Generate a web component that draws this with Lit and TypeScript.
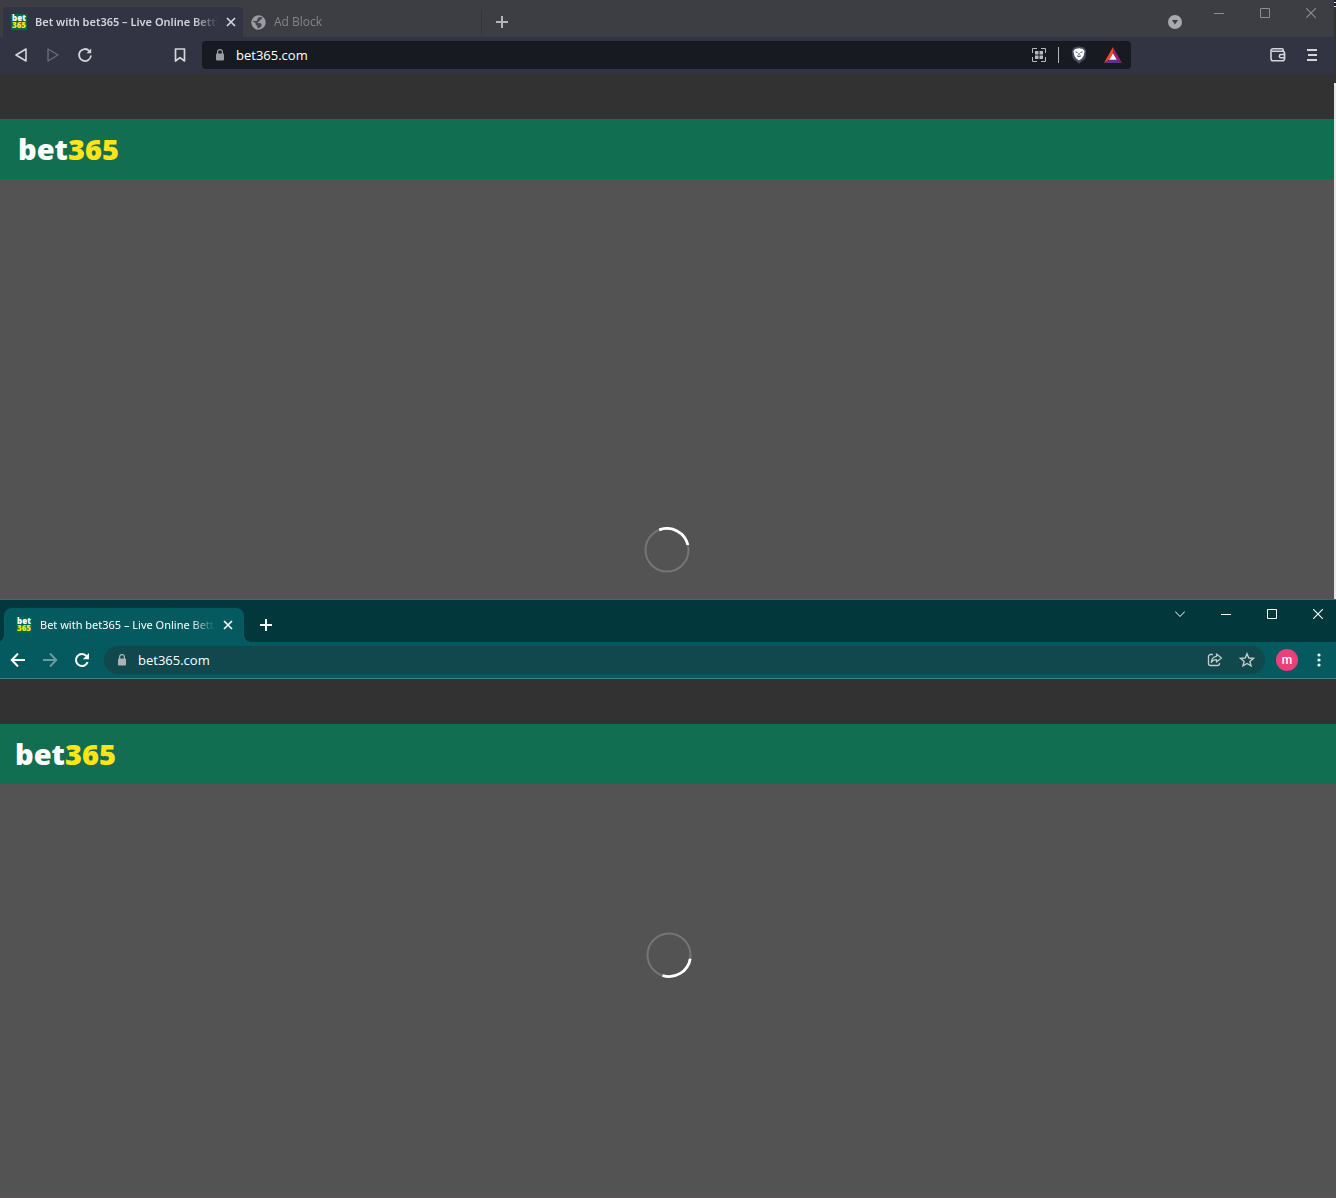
import { LitElement, html, css, svg } from "lit";
import { customElement, property } from "lit/decorators.js";

const ui = css`
  *, *::before, *::after { box-sizing: border-box; }
  button {
    display: flex; align-items: center; justify-content: center; flex: none;
    border: 0; padding: 0; margin: 0; background: none; color: inherit; font: inherit;
  }
  svg { display: block; flex: none; }
  input {
    flex: 1; min-width: 0; border: 0; padding: 0; margin: 0; outline: 0;
    background: none; color: #fff; font: 13px/20px "Open Sans", "Noto Sans", sans-serif;
  }
`;

const line = (size: number, body: unknown, width = 1) => html`
  <svg width=${size} height=${size} viewBox="0 0 ${size} ${size}" fill="none"
    stroke="currentColor" stroke-width=${width} aria-hidden="true">${body}</svg>`;

const closeTab = line(10, svg`<path d="M1 1l8 8M9 1l-8 8"/>`, 1.7);
const plus = line(12, svg`<path d="M6 0v12M0 6h12"/>`, 2);
const minimise = line(11, svg`<path d="M0 5.5h10"/>`);
const maximise = line(11, svg`<path d="M.5.5h9v9h-9z"/>`);
const closeWindow = line(10, svg`<path d="M.2.2l9.6 9.6M9.8.2L.2 9.800"/>`, 1.1);
const lock = html`
  <svg width="10" height="12" viewBox="0 0 10 12" aria-hidden="true">
    <path d="M2.6 5V3a2.4 2.4 0 0 1 4.8 0v2" fill="none" stroke="currentColor" stroke-width="1.3"/>
    <rect x="1" y="4.5" width="8" height="7" rx="1" fill="currentColor"/>
  </svg>`;

@customElement("site-favicon")
export class SiteFavicon extends LitElement {
  static styles = css`
    :host { display: block; flex: none; width: 16px; height: 16px; background: #04694a; }
    svg { display: block; overflow: visible; }
    .text { font: 800 8px "Open Sans", sans-serif; }
  `;
  render() {
    return html`
      <svg width="16" height="16" viewBox="0 0 16 16" aria-hidden="true">
        <text class="text" x="8" y="7" text-anchor="middle" fill="#fff">bet</text>
        <text class="text" x="8" y="14" text-anchor="middle" fill="#ffe418">365</text>
      </svg>`;
  }
}

@customElement("loading-page")
export class LoadingPage extends LitElement {
  @property({ type: Number }) angle = 0;

  static styles = css`
    :host { display: flex; flex-direction: column; flex: 1; background: #535353; }
    .top { height: 45px; background: #323232; }
    .header {
      display: flex; align-items: center; height: 60px; background: #126e51;
      padding-left: var(--logo-inset, 18px);
    }
    .logo { font: 800 29px/40px "Open Sans", sans-serif; color: #fff; text-decoration: none; }
    .digits { color: #ffe418; }
    .stage { display: flex; justify-content: center; padding: var(--stage-padding); }
    svg { display: block; }
  `;

  render() {
    return html`
      <div class="top"></div>
      <header class="header"><a class="logo" href="#">bet<span class="digits">365</span></a></header>
      <main class="stage">
        <svg width="46" height="46" viewBox="0 0 46 46" fill="none" role="img" aria-label="Loading">
          <circle cx="23" cy="23" r="21.5" stroke="#757575" stroke-width="2"/>
          <path d="M15.2 2.9A21.5 21.5 0 0 1 43.900 18" stroke="#fff" stroke-width="2.800"
            transform="rotate(${this.angle} 23 23)"/>
        </svg>
      </main>`;
  }
}

@customElement("brave-window")
export class BraveWindow extends LitElement {
  static styles = [ui, css`
    :host {
      display: flex; flex-direction: column; flex: 1; min-width: 0; background: #323443;
      font: 12px/16px "Open Sans", "Noto Sans", sans-serif; color: #d4d5da;
    }
    .strip { display: flex; align-items: flex-end; height: 37px; background: #3d3d44; padding-left: 3px; }
    .tab { display: flex; align-items: center; height: 30px; width: 240px; padding: 0 7px 0 8px; gap: 8px; }
    .active {
      background: #323443; border-radius: 4px 4px 0 0;
      font: 600 11px/16px "Noto Sans", "Open Sans", sans-serif;
    }
    .title {
      flex: 1; min-width: 0; overflow: hidden; white-space: nowrap;
      mask-image: linear-gradient(to right, #000 calc(100% - 24px), transparent);
    }
    .idle { color: #84848b; width: 239px; height: 24px; margin-bottom: 3px; border-right: 1px solid #35343b; }
    .new { width: 40px; height: 30px; color: #b5b5b8; }
    .fill { flex: 1; }
    .search { width: 30px; height: 30px; margin-right: 6px; }
    .controls { display: flex; align-self: flex-start; color: #8d8d91; }
    .controls button { width: 46px; height: 26px; }
    .bar { display: flex; align-items: center; height: 37px; padding: 0 6px 1px 5px; }
    .bar > button { width: 32px; height: 32px; }
    .bar .off { color: #696b77; }
    .bar .mark { margin-left: 63px; }
    .address {
      display: flex; align-items: center; flex: 1; height: 28px; margin: 0 131px 0 6px;
      padding: 0 9px 0 13px; gap: 11px; border-radius: 4px; background: #181a22;
    }
    .lock { color: #9a9ba4; }
    .actions { display: flex; align-items: center; gap: 12px; }
    .rule { width: 1px; height: 16px; background: #b4b5ba; }
    .actions .reward { margin-left: 5px; }
    .bar .menu { margin-left: 2px; }
  `];

  render() {
    return html`
      <div class="strip">
        <div class="tab active">
          <site-favicon></site-favicon>
          <span class="title">Bet with bet365 – Live Online Betting</span>
          <button aria-label="Close tab">${closeTab}</button>
        </div>
        <div class="tab idle">
          <svg width="15" height="15" viewBox="0 0 15 15" aria-hidden="true">
            <circle cx="7.5" cy="7.5" r="7.2" fill="#9b9ca3"/>
            <path d="M8.500 2l3 .6-.8 1.700-1.900.6-.3 1.500-2 .5.4 1.200 2.800.2 1 1.800-.9 1.800-2.300 1.300-1.200-.2.1-1.900L4.800 9.800l-.2-1.500L2 6.600l.3-.9 2.700.5 1.200-.9.300-1.700z" fill="#45454c"/>
          </svg>
          <span class="title">Ad Block</span>
        </div>
        <button class="new" aria-label="New tab">${plus}</button>
        <span class="fill"></span>
        <button class="search" aria-label="Search tabs">
          <svg width="14" height="14" viewBox="0 0 14 14" aria-hidden="true">
            <circle cx="7" cy="7" r="7" fill="#a9a9ad"/><path d="M4 5h6L7 9.6z" fill="#3d3c44"/>
          </svg>
        </button>
        <div class="controls">
          <button aria-label="Minimize">${minimise}</button>
          <button aria-label="Maximize">${maximise}</button>
          <button aria-label="Close">${closeWindow}</button>
        </div>
      </div>
      <div class="bar">
        <button aria-label="Back">${line(14, svg`<path d="M12 1v12L2 7z" stroke-linejoin="round"/>`, 1.6)}</button>
        <button class="off" aria-label="Forward">${line(14, svg`<path d="M2 1v12L12 7z" stroke-linejoin="round"/>`, 1.4)}</button>
        <button aria-label="Reload">${line(16, svg`<path d="M14 8.5A6 6 0 1 1 12.300 3.800"/><path d="M14.200 1.500v4.700H9.500z" fill="currentColor" stroke="none"/>`, 1.8)}</button>
        <button class="mark" aria-label="Bookmark">${line(14, svg`<path d="M2.5 1h9v12L7 9.600 2.500 13z" stroke-linejoin="round"/>`, 1.7)}</button>
        <div class="address">
          <span class="lock">${lock}</span>
          <input aria-label="Address" .value=${"bet365.com"} />
          <div class="actions">
            <button aria-label="QR code">
              <svg width="14" height="14" viewBox="0 0 14 14" aria-hidden="true">
                <path d="M.5 5V.5H5M9 .5h4.500V5M13.500 9v4.500H9M5 13.500H.5V9" fill="none" stroke="#b9bac0"/>
                <path d="M3 3h3.500v3.500H3zM7.500 3H11v3.500H7.500zM3 7.500h3.500V11H3zM7.500 7.500H11V11H7.500z" fill="#b9bac0"/>
              </svg>
            </button>
            <span class="rule"></span>
            <button aria-label="Shields">
              <svg width="16" height="18" viewBox="0 0 16 18" aria-hidden="true">
                <path d="M3 1.500L8 .3l5 1.200 2.200 3-1 8L8 17.700 1.800 12.500l-1-8z" fill="#4b4d5e"/>
                <path d="M4.200 3L8 2.200 11.800 3l1.800 2.200-1 4.600-1.900 2.700L8 14.500l-2.700-2-1.900-2.700-1-4.600z" fill="#fff"/>
                <path d="M4.500 5.800l2 .7M11.500 5.800l-2 .7M8 7v2.500M6 9.700l1.200.8h1.600l1.200-.8" fill="none" stroke="#4b4d5e" stroke-width="1"/>
              </svg>
            </button>
            <button class="reward" aria-label="Rewards">
              <svg width="18" height="16" viewBox="0 0 18 16" aria-hidden="true">
                <path d="M9 0L0 16l5.400-3.200L9 6z" fill="#ff4724"/>
                <path d="M9 0l9 16-5.400-3.200L9 6z" fill="#9e1f63"/>
                <path d="M0 16h18l-5.400-3.200H5.400z" fill="#662d91"/>
                <path d="M9 6.200l3.700 6.500H5.300z" fill="#fff"/>
              </svg>
            </button>
          </div>
        </div>
        <button aria-label="Wallet">${line(16, svg`<path d="M13.300 4.300V3.200a1.400 1.400 0 0 0-1.400-1.400H3a2 2 0 0 0-2 2v7.900a2 2 0 0 0 2 2h9.500a2 2 0 0 0 2-2V6.300a2 2 0 0 0-2-2H2M15.500 7.500H11a1.600 1.600 0 0 0 0 3.300h4.500"/>`, 1.6)}</button>
        <button class="menu" aria-label="Menu">${line(12, svg`<path d="M1 1h10M2 6h9M1 11h10"/>`, 2)}</button>
      </div>
      <loading-page></loading-page>`;
  }
}

@customElement("chrome-window")
export class ChromeWindow extends LitElement {
  static styles = [ui, css`
    :host {
      display: flex; flex-direction: column; flex: 1; background: #045a5f; color: #fff;
      border-top: 1px solid #4d6163; border-bottom: 1px solid #5a5358;
      font: 12px/16px "Open Sans", "Noto Sans", sans-serif;
    }
    .strip { display: flex; align-items: flex-end; height: 42px; background: #02373c; padding-left: 4px; }
    .tab {
      position: relative; display: flex; align-items: center; gap: 8px; width: 240px; height: 34px;
      padding: 0 11px 0 12px; background: #045a5f; border-radius: 8px 8px 0 0;
      font: 11px/16px "Noto Sans", "Open Sans", sans-serif;
    }
    .tab::before, .tab::after { content: ""; position: absolute; bottom: 0; width: 8px; height: 8px; }
    .tab::before { right: 100%; background: radial-gradient(circle at 0 0, transparent 8px, #045a5f 8px); }
    .tab::after { left: 100%; background: radial-gradient(circle at 100% 0, transparent 8px, #045a5f 8px); }
    .title {
      flex: 1; min-width: 0; overflow: hidden; white-space: nowrap;
      mask-image: linear-gradient(to right, #000 calc(100% - 24px), transparent);
    }
    .new { width: 44px; height: 34px; }
    .fill { flex: 1; }
    .controls { display: flex; align-self: flex-start; gap: 10px; }
    .controls button { width: 36px; height: 28px; }
    .bar { display: flex; align-items: center; height: 37px; padding: 0 6px 1px 2px; border-bottom: 1px solid #3d8185; }
    .bar > button { width: 32px; height: 28px; }
    .bar .off { color: #6a9b9f; }
    .address {
      display: flex; align-items: center; flex: 1; height: 28px; margin: 0 11px 0 6px;
      padding: 0 10px 0 13px; gap: 11px; border-radius: 14px; background: #10484d;
    }
    .lock { color: #adb2b4; }
    .actions { display: flex; gap: 16px; color: #c2cccd; }
    .bar .avatar {
      width: 22px; height: 22px; border-radius: 50%; background: #ec407a;
      font: 500 12px/20px Roboto, sans-serif;
    }
    .bar .menu { width: 22px; margin-left: 10px; }
    loading-page { --logo-inset: 15px; --stage-padding: 148px 0 0 2px; }
  `];

  render() {
    return html`
      <div class="strip">
        <div class="tab">
          <site-favicon></site-favicon>
          <span class="title">Bet with bet365 – Live Online Betting</span>
          <button aria-label="Close tab">${closeTab}</button>
        </div>
        <button class="new" aria-label="New tab">${plus}</button>
        <span class="fill"></span>
        <div class="controls">
          <button aria-label="Search tabs">${line(10, svg`<path d="M.2 2.500L5 7.500l4.800-5"/>`)}</button>
          <button aria-label="Minimize">${minimise}</button>
          <button aria-label="Maximize">${maximise}</button>
          <button aria-label="Close">${closeWindow}</button>
        </div>
      </div>
      <div class="bar">
        <button aria-label="Back">${line(16, svg`<path d="M15 8H2M8 1.500L1.800 8 8 14.500"/>`, 2)}</button>
        <button class="off" aria-label="Forward">${line(16, svg`<path d="M1 8h13M8 1.500L14.200 8 8 14.500"/>`, 2)}</button>
        <button aria-label="Reload">${line(16, svg`<path d="M13.600 10.200A6 6 0 1 1 12.600 4.200"/><path d="M15 1v6.200H8.800z" fill="currentColor" stroke="none"/>`, 2)}</button>
        <div class="address">
          <span class="lock">${lock}</span>
          <input aria-label="Address" .value=${"bet365.com"} />
          <div class="actions">
            <button aria-label="Share">${line(16, svg`<path d="M6 2.500H3.500a2 2 0 0 0-2 2v7a2 2 0 0 0 2 2h7a2 2 0 0 0 2-2V11"/><path d="M9.500 2l5 4-5 4V7.700C7 7.700 5.500 8.500 4.300 10.500 4.500 7 6.500 4.700 9.500 4.300z" stroke-linejoin="round"/>`, 1.3)}</button>
            <button aria-label="Bookmark">${line(16, svg`<path d="M8 1.800l1.800 4.200 4.600.4-3.500 3 1.100 4.500L8 11.500l-4 2.400 1.100-4.500-3.500-3 4.600-.4z"/>`, 1.4)}</button>
          </div>
        </div>
        <button class="avatar" aria-label="Profile m">m</button>
        <button class="menu" aria-label="Menu">
          <svg width="4" height="14" viewBox="0 0 4 14" fill="currentColor" aria-hidden="true">
            <circle cx="2" cy="2" r="1.600"/><circle cx="2" cy="7" r="1.600"/><circle cx="2" cy="12" r="1.600"/>
          </svg>
        </button>
      </div>
      <loading-page angle="121"></loading-page>`;
  }
}

@customElement("app-root")
export class AppRoot extends LitElement {
  static styles = css`
    :host { display: flex; flex-direction: column; min-height: 100vh; background: #535353; }
    .upper { display: flex; }
    .edge { display: flex; flex-direction: column; width: 2px; flex: none; background: #e8e8e8; }
    .shade {
      height: 83px;
      background: linear-gradient(#1c1b2b 2px, #e0e0e0 2px 3px, #1c1b2b 3px 6px, #e0e0e0 6px 7px, #333 7px);
    }
    brave-window { --logo-inset: 18px; --stage-padding: 348px 0 26px; }
  `;

  render() {
    return html`
      <div class="upper">
        <brave-window></brave-window>
        <div class="edge"><div class="shade"></div></div>
      </div>
      <chrome-window></chrome-window>`;
  }
}
